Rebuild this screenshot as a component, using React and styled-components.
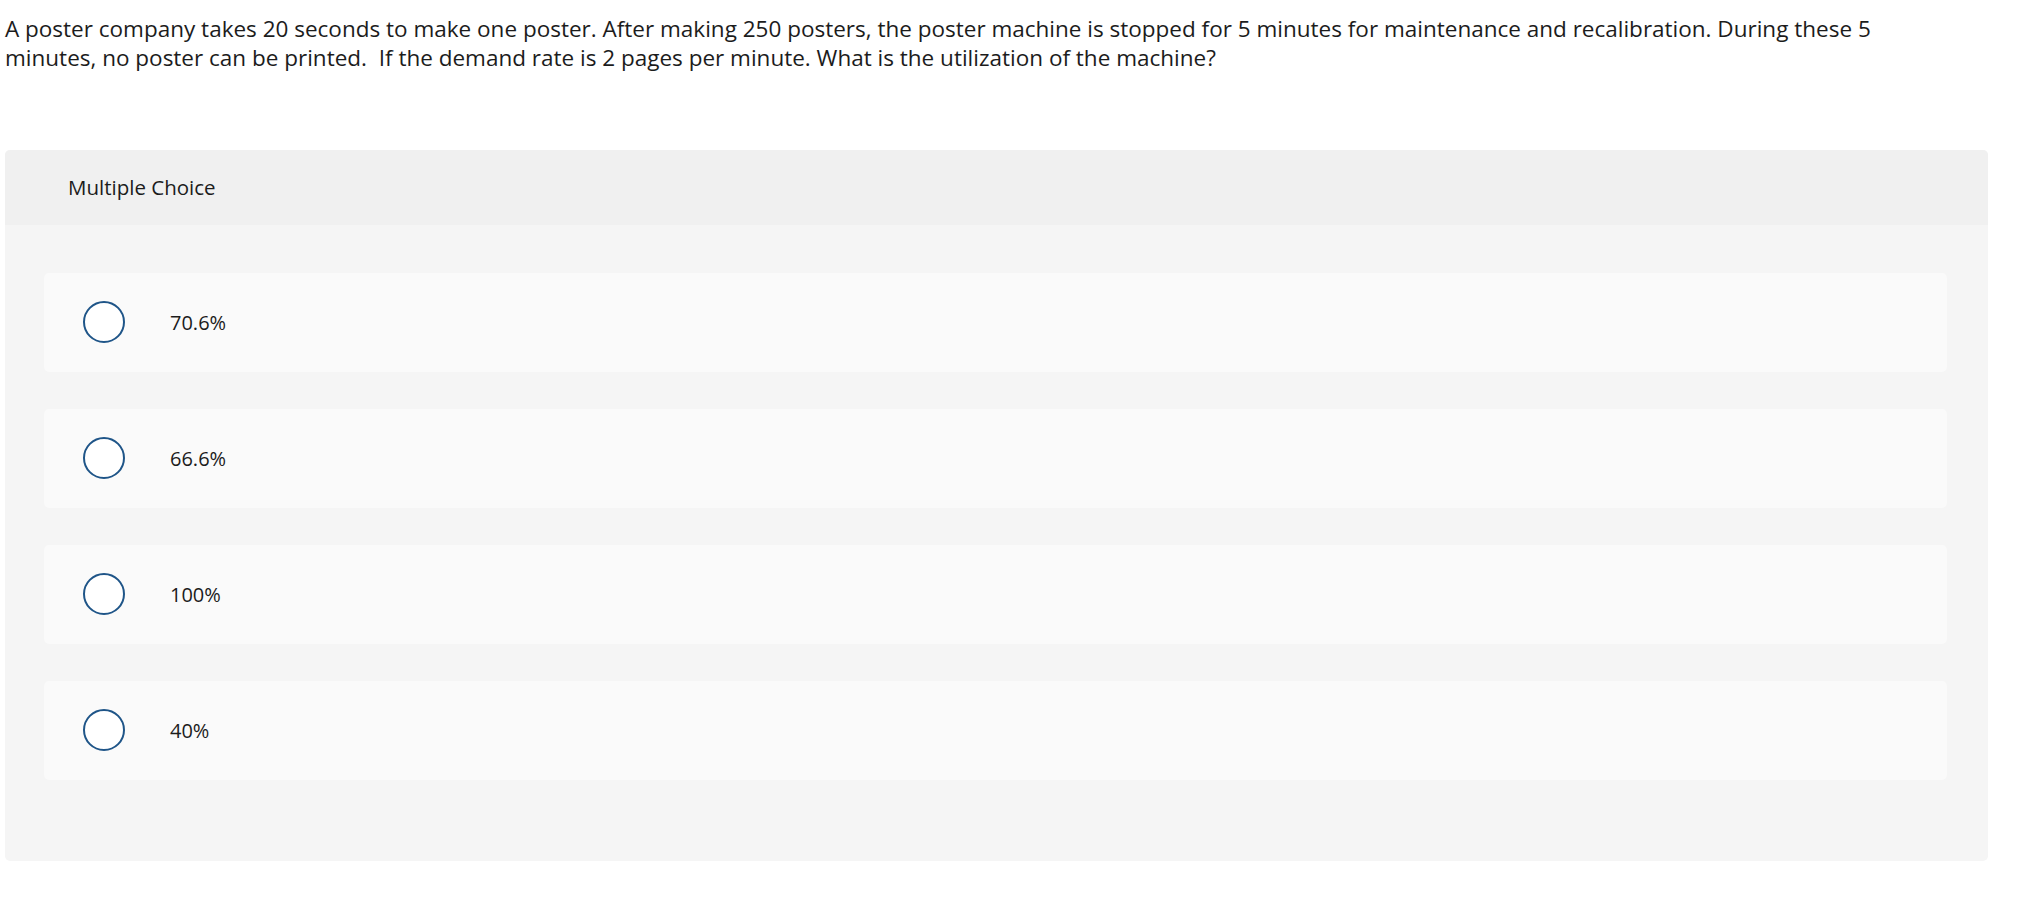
import React from "react";
import styled, { createGlobalStyle } from "styled-components";

const GlobalStyle = createGlobalStyle`
    html, body {
        margin: 0;
        padding: 0;
        background: #ffffff;
    }
    body {
        font-family: 'Open Sans', 'Liberation Sans', sans-serif;
        color: #1c1c1c;
    }
`

const Page = styled.div`
    width: 2040px;
    padding: 14px 52px 36px 5px;
    box-sizing: border-box;
`

const Question = styled.p`
    margin: 0;
    width: 1925px;
    font-size: 22.5px;
    line-height: 29.4px;
    color: #1c1c1c;
`

const Panel = styled.section`
    margin-top: 77px;
    width: 1983px;
    background-color: #f5f5f5;
    border-radius: 5px;
    overflow: hidden;
`

const PanelHeader = styled.div`
    height: 75px;
    display: flex;
    align-items: center;
    padding-left: 63px;
    background-color: #f0f0f0;
    font-size: 20.5px;
    color: #1c1c1c;
`

const Choices = styled.div`
    display: flex;
    flex-direction: column;
    gap: 37px;
    padding: 48px 41px 81px 39px;
`

const Choice = styled.label`
    height: 99px;
    display: flex;
    align-items: center;
    padding-left: 39px;
    background-color: #fafafa;
    border-radius: 5px;
    cursor: pointer;
`

const Radio = styled.span`
    width: 42px;
    height: 42px;
    box-sizing: border-box;
    border: 2.5px solid #1f5588;
    border-radius: 50%;
    background-color: #ffffff;
    flex-shrink: 0;
`

const ChoiceText = styled.span`
    margin-left: 45px;
    font-size: 20px;
    color: #1c1c1c;
`

const choices = ["70.6%", "66.6%", "100%", "40%"];

const App = () => {
    return (
        <Page>
            <GlobalStyle />
            <Question>
                A poster company takes 20 seconds to make one poster. After making 250 posters, the poster machine is stopped for 5 minutes for maintenance and recalibration. During these 5 minutes, no poster can be printed.&nbsp; If the demand rate is 2 pages per minute. What is the utilization of the machine?
            </Question>
            <Panel>
                <PanelHeader>Multiple Choice</PanelHeader>
                <Choices>
                    {choices.map((c) => (
                        <Choice key={c}>
                            <Radio />
                            <ChoiceText>{c}</ChoiceText>
                        </Choice>
                    ))}
                </Choices>
            </Panel>
        </Page>
    )
}

export default App;
